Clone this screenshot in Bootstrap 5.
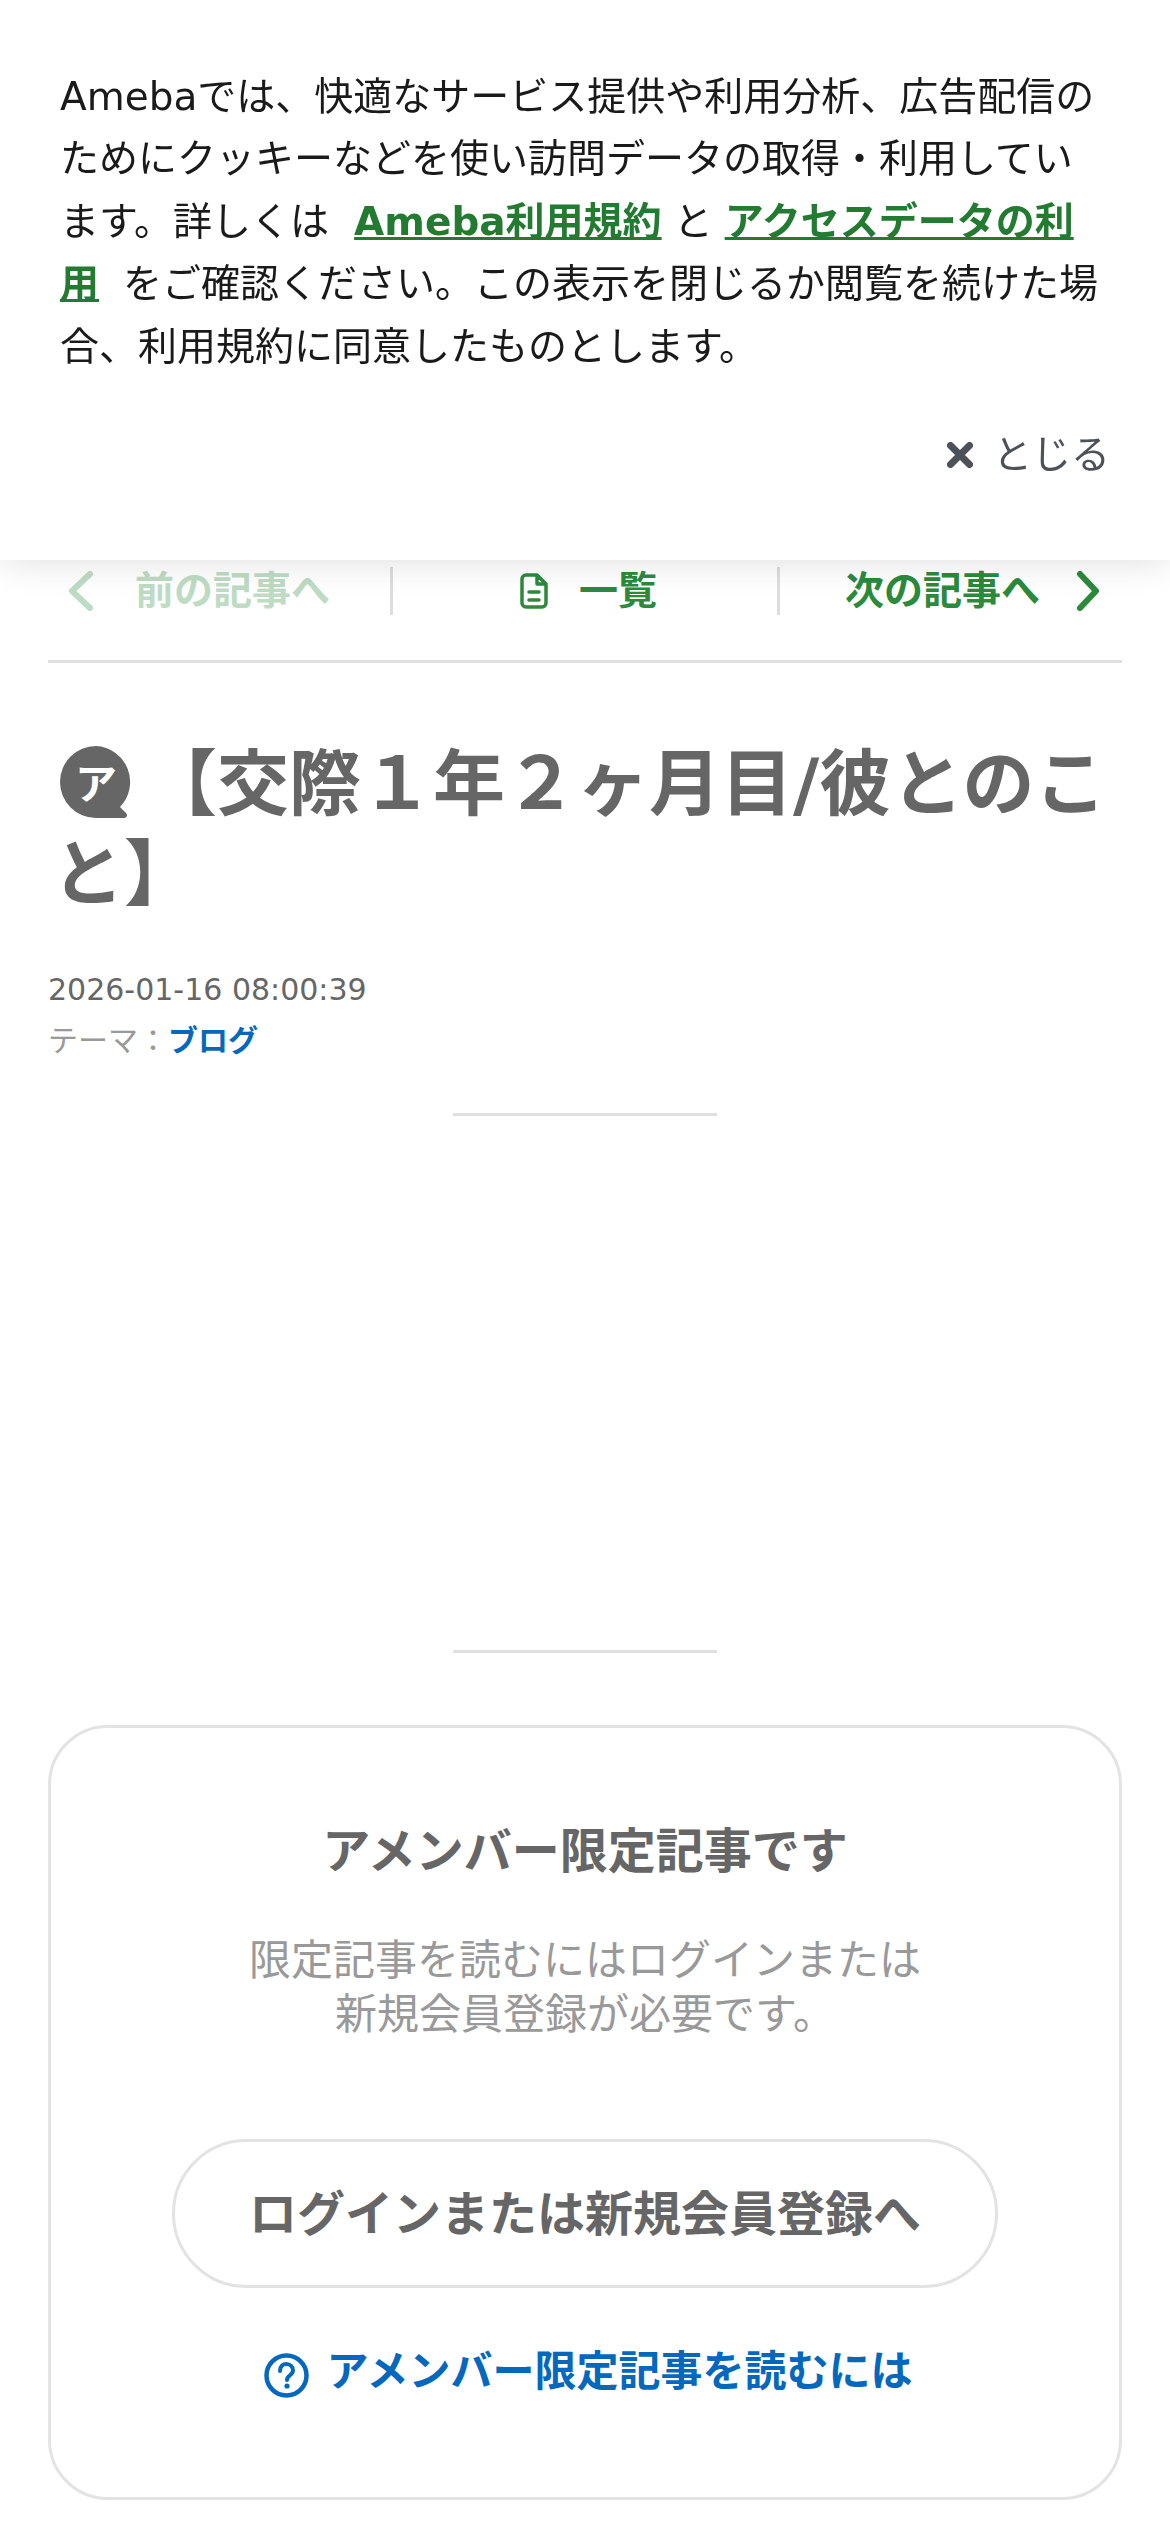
<!DOCTYPE html>
<html lang="ja">
<head>
<meta charset="utf-8">
<title>アメンバー限定記事</title>
<link href="https://cdn.jsdelivr.net/npm/bootstrap@5.3.0/dist/css/bootstrap.min.css" rel="stylesheet">
<style>
body{font-family:"DejaVu Sans","Noto Sans CJK JP",sans-serif;background:#fff;color:#666}
.consent{background:#fff;height:560px;padding:66px 60px 0;box-shadow:0 0 36px rgba(0,0,0,.14);z-index:10}
.consent-text{font-size:39px;line-height:62.4px;color:#1a1a1a;margin:0}
.consent-text a{color:#237b31;font-weight:700;text-decoration-thickness:3px}
.lnk-a{margin:0 12px 0 25px}
.lnk-b{margin:0 24px 0 12px}
.closer{font-size:39px;line-height:62px;color:#4d5259;gap:20px;margin-top:46px}
.page-wrap{padding-top:567px}
.pager{height:48px;font-size:39px;line-height:48px;font-weight:700;color:#2b8a3c}
.pager-prev{width:390px;flex:none;padding-left:68px;gap:41px}
.pager-list{width:387px;flex:none;border-left:3px solid #ddd;padding-left:7px;gap:31px}
.pager-next{flex:1 1 auto;border-left:3px solid #ddd;padding-right:71px;gap:37px}
.pager-off{opacity:.3}
.rule-full{height:3px;background:#e0e0e0;margin:45px 48px 0}
.post-title{font-size:72px;line-height:90px;font-weight:700;color:#666;margin:76px 48px 0 52px}
.post-title svg{width:72px;height:72px;vertical-align:-9px;margin:0 13px 0 8px}
.post-meta{margin:45px 48px 0;font-size:30px;line-height:51px;color:#666}
.post-theme{color:#999}
.post-theme a{color:#0568bd;font-weight:700;text-decoration:none}
.rule-short{height:3px;width:264px;background:#e0e0e0;margin:0 auto}
.rule-upper{margin-top:47px}
.ad-gap{height:534px}
.locked{margin:72px 48px 0;height:775px;border:3px solid #e3e3e3;border-radius:60px;padding-top:93px}
.locked-title{font-size:48px;line-height:60px;font-weight:700;color:#666;margin:0}
.locked-sub{font-size:42px;line-height:54px;color:#999;margin:53px 0 0}
.login-pill{width:826px;height:149px;margin:97px auto 0;border:3px solid #e3e3e3;border-radius:75px;font-size:48px;font-weight:700;color:#666;background:#fff}
.help-link{font-size:42px;line-height:60px;font-weight:700;color:#0568bd;margin-top:54px;padding-left:6px;gap:18px;text-decoration:none}
.help-link svg{margin-top:6px}
</style>
</head>
<body>
<div class="consent fixed-top">
  <p class="consent-text">Amebaでは、快適なサービス提供や利用分析、広告配信のためにクッキーなどを使い訪問データの取得・利用しています。詳しくは<a class="lnk-a" href="#">Ameba利用規約</a>と<a class="lnk-b" href="#">アクセスデータの利用</a>をご確認ください。この表示を閉じるか閲覧を続けた場合、利用規約に同意したものとします。</p>
  <div class="closer d-flex justify-content-end align-items-center">
    <svg width="26" height="26" viewBox="0 0 26 26" aria-hidden="true"><path d="M3.500 3.500L22.500 22.500M22.500 3.500L3.500 22.500" stroke="#4d5259" stroke-width="7" stroke-linecap="round" fill="none"/></svg>
    <span>とじる</span>
  </div>
</div>

<div class="page-wrap">
  <nav class="pager d-flex">
    <div class="pager-prev pager-off d-flex align-items-center">
      <svg width="26" height="40" viewBox="0 0 26 40" aria-hidden="true"><path d="M22 3L4 20L22 37" stroke="#2b8a3c" stroke-width="6" stroke-linecap="round" stroke-linejoin="round" fill="none"/></svg>
      <span>前の記事へ</span>
    </div>
    <div class="pager-list d-flex align-items-center justify-content-center">
      <svg width="28" height="36" viewBox="0 0 28 36" aria-hidden="true"><path d="M6 2H17L26 11V30A4 4 0 0 1 22 34H6A4 4 0 0 1 2 30V6A4 4 0 0 1 6 2Z M17 2V11H26 M9 19H19 M9 27H19" stroke="#2b8a3c" stroke-width="3.500" stroke-linecap="round" stroke-linejoin="round" fill="none"/></svg>
      <span>一覧</span>
    </div>
    <div class="pager-next d-flex align-items-center justify-content-end">
      <span>次の記事へ</span>
      <svg width="22" height="40" viewBox="0 0 22 40" aria-hidden="true"><path d="M3 3L19 20L3 37" stroke="#2b8a3c" stroke-width="6" stroke-linecap="round" stroke-linejoin="round" fill="none"/></svg>
    </div>
  </nav>
  <div class="rule-full"></div>

  <h1 class="post-title">
    <svg viewBox="0 0 72 72" aria-hidden="true"><path d="M36 0A36 36 0 0 0 36 72H64C67 72 68 69 66 67L60 61A36 36 0 0 0 36 0Z" fill="#666"/><text x="36" y="53" text-anchor="middle" font-size="42" font-weight="700" fill="#fff" font-family="Noto Sans CJK JP, sans-serif">ア</text></svg>【交際１年２ヶ月目/彼とのこと】
  </h1>

  <div class="post-meta">
    <div>2026-01-16 08:00:39</div>
    <div class="post-theme">テーマ：<a href="#">ブログ</a></div>
  </div>

  <div class="rule-short rule-upper"></div>
  <div class="ad-gap"></div>
  <div class="rule-short"></div>

  <section class="locked text-center d-flex flex-column">
    <h2 class="locked-title">アメンバー限定記事です</h2>
    <p class="locked-sub">限定記事を読むにはログインまたは<br>新規会員登録が必要です。</p>
    <a href="#" class="login-pill d-flex align-items-center justify-content-center text-decoration-none">ログインまたは新規会員登録へ</a>
    <a href="#" class="help-link d-flex align-items-center justify-content-center">
      <svg width="45" height="45" viewBox="0 0 45 45" aria-hidden="true"><circle cx="22.500" cy="22.500" r="20" stroke="#0568bd" stroke-width="4.500" fill="none"/><path d="M16 18C16 8 29 9.500 29 17.500C29 22 23 22.500 23 27" stroke="#0568bd" stroke-width="4" stroke-linecap="round" fill="none"/><circle cx="23" cy="33" r="2.600" fill="#0568bd"/></svg>
      <span>アメンバー限定記事を読むには</span>
    </a>
  </section>
</div>
<script src="https://cdn.jsdelivr.net/npm/bootstrap@5.3.0/dist/js/bootstrap.bundle.min.js"></script>
</body>
</html>
